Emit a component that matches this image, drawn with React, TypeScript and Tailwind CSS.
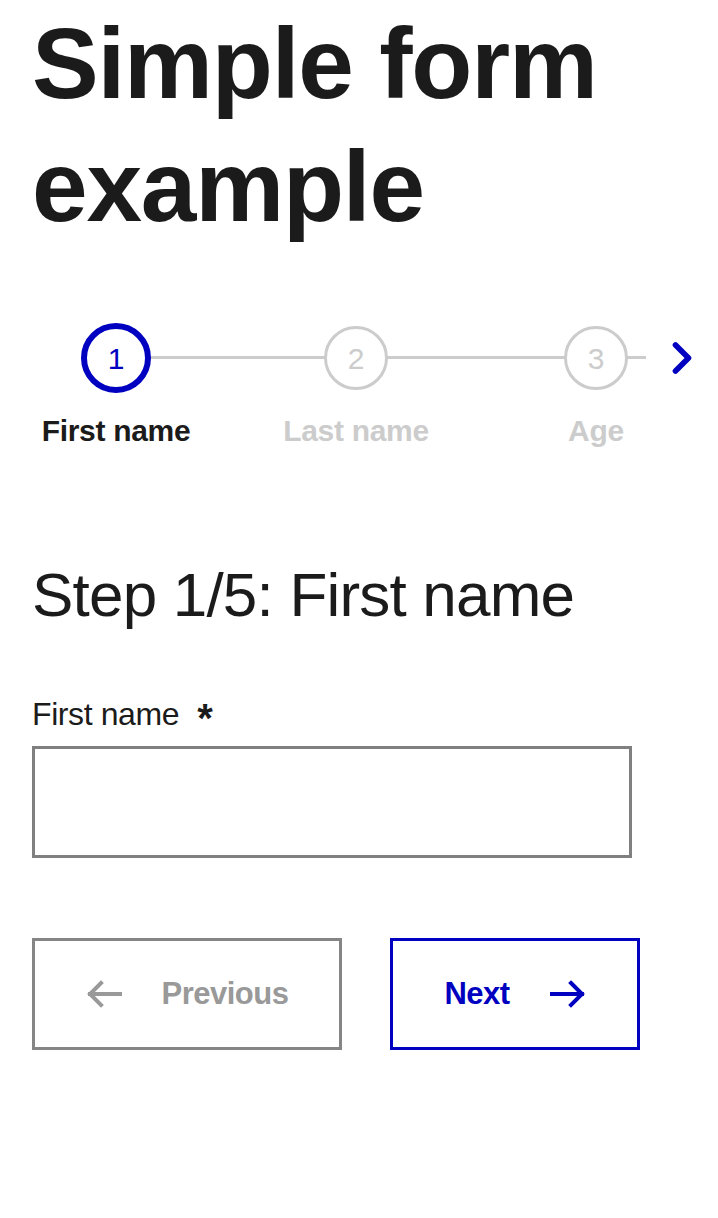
import React from 'react';
import { ChevronRight } from 'lucide-react';

const steps = ['First name', 'Last name', 'Age'];

const ArrowIcon = ({ dir }: { dir: 'left' | 'right' }) => (
  <svg width="36" height="30" viewBox="0 0 36 30" fill="none" stroke="currentColor" strokeWidth="4" strokeLinecap="square">
    {dir === 'left' ? (
      <>
        <path d="M4 15h30" />
        <path d="M15 4 4 15l11 11" />
      </>
    ) : (
      <>
        <path d="M2 15h30" />
        <path d="M21 4l11 11-11 11" />
      </>
    )}
  </svg>
);

export default function App() {
  const current = 0;

  return (
    <div className="min-h-screen bg-white text-[#1b1b1b] font-['Liberation_Sans',Arial,sans-serif]">
      <div className="pl-8 pt-[2px]">
        <h1 className="text-[100px] font-bold leading-[123px] tracking-[-1.2px]">
          Simple form example
        </h1>
      </div>

      {/* stepper */}
      <div className="mt-[75px] flex items-start">
        <div className="flex-1 overflow-hidden">
          <ol className="flex -ml-1">
            {steps.map((label, i) => {
              const active = i === current;
              return (
                <li key={label} className="w-[240px] shrink-0 flex flex-col items-center">
                  <div className="relative w-full h-[70px] flex items-center justify-center">
                    {i > 0 && <div className="absolute left-0 right-1/2 top-[33px] h-[3px] bg-[#cccccc]" />}
                    <div className="absolute left-1/2 right-0 top-[33px] h-[3px] bg-[#cccccc]" />
                    <div
                      className={
                        active
                          ? 'relative z-10 w-[70px] h-[70px] rounded-full border-[6px] border-[#0000c0] bg-white flex items-center justify-center text-[30px] text-[#0000c0]'
                          : 'relative z-10 w-[64px] h-[64px] rounded-full border-[3px] border-[#cccccc] bg-white flex items-center justify-center text-[30px] text-[#cccccc]'
                      }
                    >
                      {i + 1}
                    </div>
                  </div>
                  <span
                    className={
                      active
                        ? 'mt-[20px] text-[30px] font-bold leading-[36px] text-[#1b1b1b] tracking-[-0.3px]'
                        : 'mt-[20px] text-[30px] font-bold leading-[36px] text-[#cccccc] tracking-[-0.3px]'
                    }
                  >
                    {label}
                  </span>
                </li>
              );
            })}
          </ol>
        </div>
        <button className="w-[72px] h-[70px] flex items-center justify-center text-[#0000c0]">
          <ChevronRight size={52} strokeWidth={2.6} />
        </button>
      </div>

      <div className="px-8">
        <h2 className="mt-[110px] text-[62px] font-normal leading-[72px] tracking-[-0.8px]">
          Step 1/5: First name
        </h2>

        <form className="mt-[64px]">
          <label className="flex items-center gap-[18px] text-[32px] leading-[38px] tracking-[-0.4px]">
            First name
            <span className="text-[40px] font-bold leading-[38px] translate-y-[4px]">*</span>
          </label>
          <input
            type="text"
            className="mt-[13px] block w-[600px] h-[112px] border-[3px] border-[#808080] bg-white px-4 text-[30px] outline-none"
          />

          <div className="mt-[80px] flex gap-12">
            <button
              type="button"
              className="w-[310px] h-[112px] border-[3px] border-[#858585] flex items-center justify-center gap-10 text-[31px] font-bold text-[#999999] tracking-[-0.5px]"
            >
              <ArrowIcon dir="left" />
              Previous
            </button>
            <button
              type="button"
              className="w-[250px] h-[112px] border-[3px] border-[#0000c0] flex items-center justify-center gap-10 text-[31px] font-bold text-[#0000c0] tracking-[-0.5px]"
            >
              Next
              <ArrowIcon dir="right" />
            </button>
          </div>
        </form>
      </div>
    </div>
  );
}
